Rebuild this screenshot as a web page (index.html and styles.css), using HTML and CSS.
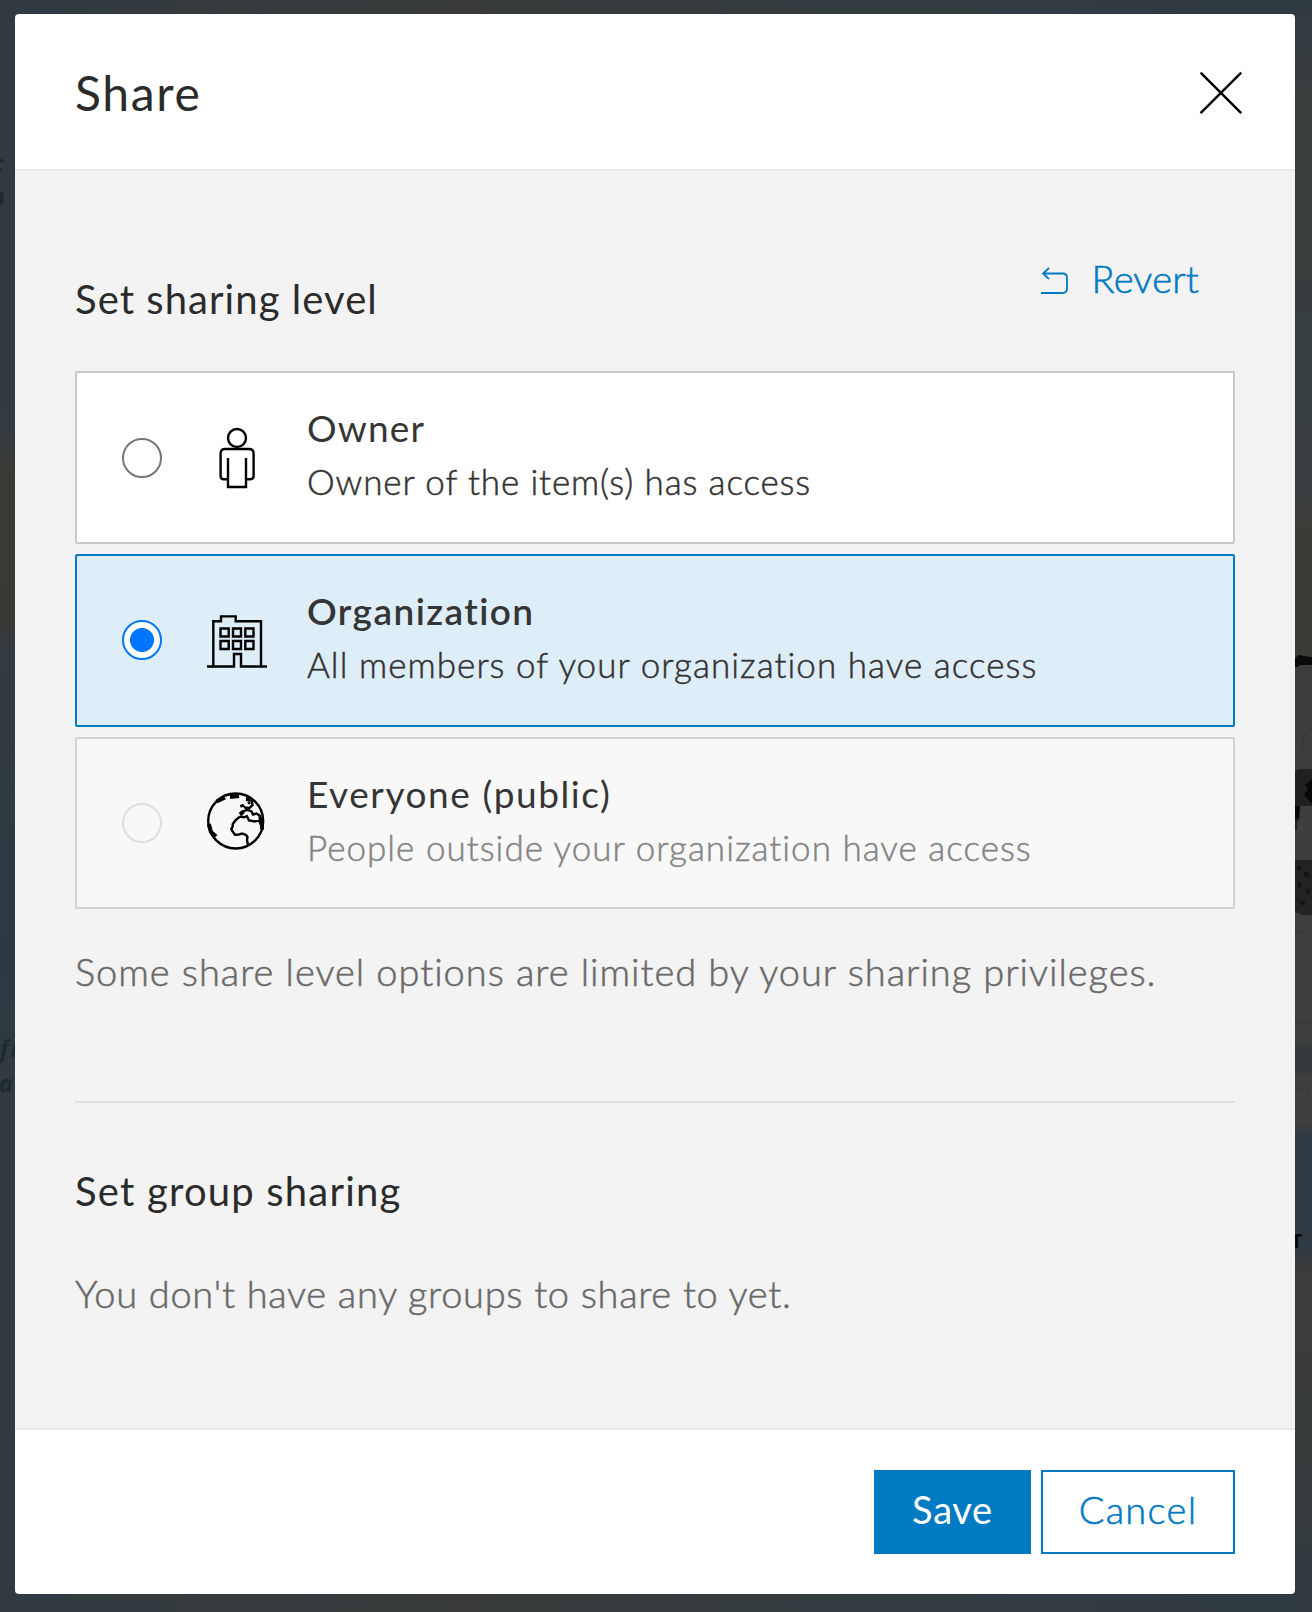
FILE: index.html
```html
<!DOCTYPE html>
<html lang="en">
<head>
<meta charset="utf-8">
<title>Share</title>
<link rel="stylesheet" href="styles.css">
</head>
<body>
<svg class="map" viewBox="0 0 1312 1612" aria-hidden="true">
  <defs>
    <linearGradient id="west" x1="0" y1="0" x2="0" y2="1">
      <stop offset="0" stop-color="#303a40"/><stop offset=".24" stop-color="#303a40"/>
      <stop offset=".27" stop-color="#343b3f"/><stop offset=".29" stop-color="#3a3a35"/>
      <stop offset=".33" stop-color="#393a35"/><stop offset=".37" stop-color="#383a32"/>
      <stop offset=".385" stop-color="#393733"/><stop offset=".4" stop-color="#333b40"/>
      <stop offset=".46" stop-color="#2f393f"/><stop offset=".6" stop-color="#2d3842"/>
      <stop offset=".66" stop-color="#303a3f"/><stop offset="1" stop-color="#303a3f"/>
    </linearGradient>
    <linearGradient id="east" x1="0" y1="0" x2="0" y2="1">
      <stop offset="0" stop-color="#2f3a41"/><stop offset=".06" stop-color="#383c3d"/>
      <stop offset=".17" stop-color="#373c3d"/><stop offset=".21" stop-color="#353d40"/>
      <stop offset=".305" stop-color="#373d40"/><stop offset=".318" stop-color="#3b3b39"/>
      <stop offset=".38" stop-color="#393b34"/><stop offset=".405" stop-color="#3a3b34"/>
      <stop offset=".415" stop-color="#3d3d3c"/><stop offset=".645" stop-color="#3f3e3c"/>
      <stop offset=".65" stop-color="#33393d"/><stop offset=".664" stop-color="#33393d"/>
      <stop offset=".668" stop-color="#403f3d"/><stop offset=".695" stop-color="#403f3d"/>
      <stop offset=".705" stop-color="#2f3a42"/><stop offset=".772" stop-color="#2f3a42"/>
      <stop offset=".79" stop-color="#3c3b3a"/><stop offset=".9" stop-color="#373b3c"/>
      <stop offset="1" stop-color="#303a40"/>
    </linearGradient>
    <linearGradient id="coast" x1="0" y1="0" x2="1" y2="0">
      <stop offset="0" stop-color="#303a40"/><stop offset=".35" stop-color="#393b3b"/>
      <stop offset=".6" stop-color="#333b3f"/><stop offset="1" stop-color="#2f3a41"/>
    </linearGradient>
  </defs>
  <rect width="1312" height="1612" fill="url(#coast)"/>
  <rect width="15" height="1612" fill="url(#west)"/>
  <rect x="1295" width="17" height="1612" fill="url(#east)"/>
  <path d="M1295 658L1299 655L1304 656L1312 657V665H1300L1298 667H1295Z" fill="#0a0a0a"/>
  <path d="M1295 771L1300 769H1312V806H1300V818L1297 822V830H1295Z" fill="#202020"/>
  <path d="M1312 779L1305 785L1308 789L1304 795L1312 804ZM1295 806H1300L1298 819H1295Z" fill="#080808"/>
  <path d="M1295 860H1312V915H1303L1295 912Z" fill="#222"/>
  <path d="M1297 866h4v4h-4zM1304 872h5v5h-5zM1298 882h3v6h-3zM1306 889h4v5h-4zM1300 901h5v4h-5z" fill="#151515"/>
  <path d="M1312 729Q1303 734 1303 743T1312 757M1295 932L1308 930M1295 1023H1312M1295 1087L1310 1092L1295 1108" fill="none" stroke="#333538"/>
  <g class="labels">
    <text x="-8" y="172">c</text><text x="-9" y="205">n</text>
    <text x="0" y="1057">f</text><text x="11" y="1057">i</text><text x="-1" y="1092">a</text>
  </g>
  <text class="city" x="1291" y="1248">T</text>
</svg>

<main class="modal">
  <header class="modal-header">
    <h1 class="modal-title">Share</h1>
    <button class="close" aria-label="Close"><svg width="44" height="44" viewBox="0 0 44 44"><path d="M1.6 1.6L42.2 42.2M42.2 1.6L1.6 42.2"/></svg></button>
  </header>

  <section class="modal-body">
    <div class="level-head">
      <h2 class="section-title">Set sharing level</h2>
      <button class="revert">
        <svg width="28" height="28" viewBox="0 0 28 28"><path d="M0 26H21.5Q26 26 26 21.5V11Q26 6.5 21.5 6.5H2M8 1L2 6.5L8 12"/></svg>
        <span>Revert</span>
      </button>
    </div>

    <div class="options">
      <label class="option">
        <span class="radio"></span>
        <svg class="option-icon" viewBox="0 0 60 60"><circle cx="30" cy="10" r="9"/><path d="M21 30V59H39V30M21 51.2H16.5Q13.6 51.2 13.6 48V25.5Q13.6 21 18 21H42Q46.6 21 46.6 25.5V48Q46.6 51.2 43.5 51.2H39"/></svg>
        <span class="option-text"><span class="option-name owner">Owner</span><span class="option-desc owner-desc">Owner of the item(s) has access</span></span>
      </label>
      <label class="option selected">
        <span class="radio"></span>
        <svg class="option-icon" viewBox="0 0 60 60"><path d="M0 55.5H27V43H34V55.5H60M6.3 55V10.2H14V5.4H28.7V10.2H54V55M13.5 17.5H21.7V25.5H13.5ZM26 17.5H34V25.5H26ZM38.3 17.5H46.5V25.5H38.3ZM13.5 30H21.7V38H13.5ZM26 30H34V38H26ZM38.3 30H46.5V38H38.3Z"/></svg>
        <span class="option-text"><span class="option-name">Organization</span><span class="option-desc">All members of your organization have access</span></span>
      </label>
      <label class="option disabled">
        <span class="radio"></span>
        <svg class="option-icon" viewBox="0 0 60 60"><circle cx="28.7" cy="28" r="27.5"/><path d="M33 23.5L28.7 27L25.8 31L25.5 34L24.3 36L26 39L28 41.7L32 41.5L35 40.5L39 42L40.5 44L40 47L41 52M33 23.5L37 24.3L40 23.2L42 27.5L48 28.5L52 27.3L54 32L56 37M33.5 20.3L36.5 18.2L40.3 16.8L44.5 18.5L46 21.5L49.5 20.5L52.5 22.5L53 27.5M53 22.5L55.5 31M40.3 6L44.8 8.3L45.5 12L42.5 15L38.8 14.7M41 9L43 11"/><path class="heavy" d="M9.5 8.5L18 4.5M23 4L32 3M1.9 31L4 39L9 43.5M34.5 11.5L35.7 14M33 21.5L36.5 18.5M37.5 15.5L39 14M39 6L43 6.5M55 31V36"/></svg>
        <span class="option-text"><span class="option-name">Everyone (public)</span><span class="option-desc">People outside your organization have access</span></span>
      </label>
    </div>
    <p class="note">Some share level options are limited by your sharing privileges.</p>
    <hr class="rule">
    <h2 class="section-title group-title">Set group sharing</h2>
    <p class="note empty">You don't have any groups to share to yet.</p>
  </section>

  <footer class="modal-footer">
    <button class="btn primary">Save</button>
    <button class="btn">Cancel</button>
  </footer>
</main>
</body>
</html>
```
FILE: styles.css
```css
* { box-sizing: border-box; }

body {
  margin: 0;
  height: 1612px;
  padding: 14px 17px 18px 15px;
  background: #303a40;
  font-family: Lato, "Liberation Sans", sans-serif;
  color: #2b2b2b;
  overflow: hidden;
}

h1, h2, p { margin: 0; font-weight: 400; }

button {
  padding: 0;
  border: 0;
  background: none;
  font: inherit;
}

svg { display: block; }

.map {
  position: absolute;
  inset: 0;
  width: 1312px;
  height: 1612px;
}
.labels { font: italic 700 23px "Noto Sans", sans-serif; fill: #1b2a33; }
.city { font: 700 19px "Noto Sans", sans-serif; fill: #060606; }

.modal {
  position: relative;
  display: flex;
  flex-direction: column;
  height: 1580px;
  border-radius: 4px;
  background: #fff;
  overflow: hidden;
}

.modal-header {
  display: flex;
  align-items: center;
  justify-content: space-between;
  height: 155px;
  padding: 0 52px 0 60px;
}
.modal-title { padding-top: 2px; font-size: 48px; line-height: 60px; letter-spacing: 1.7px; }
.close svg { fill: none; stroke: #000; stroke-width: 2.4; }
.close { margin-top: 3px; }

.modal-body {
  height: 1261px;
  padding: 78px 60px 0;
  border-top: 2px solid #e8e8e8;
  border-bottom: 2px solid #e8e8e8;
  background: #f3f3f3;
}

.level-head {
  display: flex;
  align-items: flex-start;
  justify-content: space-between;
  height: 122px;
  padding-right: 36px;
}
.section-title { font-size: 40px; line-height: 56px; letter-spacing: 1.05px; }
.level-head .section-title { margin-top: 22px; }

.revert {
  display: flex;
  align-items: center;
  gap: 22px;
  height: 58px;
  color: #007ac2;
  font-size: 38px;
  font-weight: 300;
  line-height: 56px;
  letter-spacing: .2px;
  -webkit-text-stroke: .6px currentColor;
}
.revert svg { margin: 5px 1px 0 -1px; fill: none; stroke: currentColor; stroke-width: 1.8; }

.options { display: flex; flex-direction: column; gap: 10px; }
.option {
  display: flex;
  align-items: center;
  height: 173px;
  padding-left: 45px;
  border: 2px solid #c9c9c9;
  border-radius: 2px;
  background: #fff;
}
.radio {
  flex: none;
  width: 40px;
  height: 40px;
  border: 2px solid #767676;
  border-radius: 50%;
  background: #fff;
}
.option-icon {
  flex: none;
  width: 60px;
  height: 60px;
  margin-left: 45px;
  overflow: visible;
  fill: none;
  stroke: #000;
  stroke-width: 2.4;
}
.heavy { stroke-width: 4; }
.option-text { display: flex; flex-direction: column; margin-left: 40px; padding-bottom: 5px; }
.option-name { color: #353535; font-size: 37px; line-height: 52px; letter-spacing: 1.58px; }
.option-name.owner { letter-spacing: 1.15px; }
.option-desc {
  color: #333;
  font-size: 35px;
  font-weight: 300;
  line-height: 54px;
  letter-spacing: 1.05px;
  -webkit-text-stroke: .5px currentColor;
}
.option-desc.owner-desc { letter-spacing: .87px; }

.selected { border-color: #007ac2; background: #deeef9; }
.selected .radio {
  margin-bottom: 2px;
  border-color: #0075ff;
  background: radial-gradient(circle, #0075ff 11.6px, #fff 12.4px);
}
.selected .option-name { font-weight: 600; letter-spacing: 1.42px; }
.disabled { height: 172px; border-color: #d3d3d3; background: #f8f8f8; }
.disabled .radio { margin-bottom: 1px; border-color: #dedede; background: none; }
.disabled .option-desc { color: #858585; letter-spacing: 1.02px; }

.note {
  margin-top: 34px;
  color: #6a6a6a;
  font-size: 38px;
  font-weight: 300;
  line-height: 56px;
  letter-spacing: .96px;
  white-space: nowrap;
  -webkit-text-stroke: .55px currentColor;
}
.rule { height: 2px; margin: 102px 0 0; border: 0; background: #dfdfdf; }
.group-title { margin-top: 60px; letter-spacing: 1.2px; }
.empty { margin-top: 46px; letter-spacing: .7px; }

.modal-footer {
  display: flex;
  justify-content: flex-end;
  gap: 10px;
  height: 164px;
  padding: 40px 60px 0;
}
.btn {
  width: 194px;
  height: 84px;
  padding-bottom: 7px;
  border: 2px solid #007ac2;
  color: #007ac2;
  font-size: 38px;
  font-weight: 300;
  letter-spacing: 1.33px;
  -webkit-text-stroke: .55px currentColor;
}
.btn.primary {
  width: 157px;
  background: #007ac2;
  color: #fff;
  font-weight: 400;
  letter-spacing: .7px;
  -webkit-text-stroke: 0;
}
```
